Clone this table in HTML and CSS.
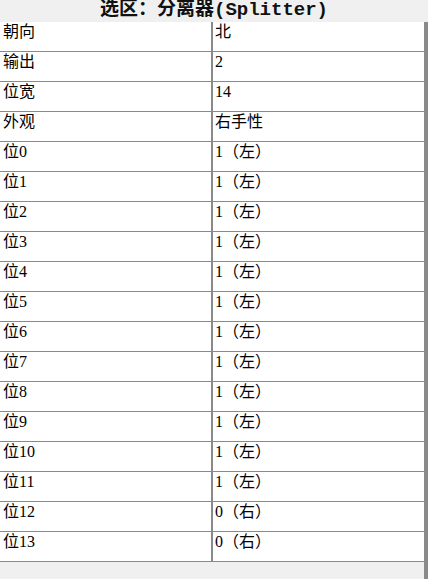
FILE: index.html
```html
<!DOCTYPE html>
<html lang="zh">
<head>
<meta charset="utf-8">
<title>选区：分离器(Splitter)</title>
<link rel="stylesheet" href="styles.css">
</head>
<body>
<div class="panel">
  <div class="title">选区：分离器(Splitter)</div>
  <div class="body">
    <div class="table">
      <div class="row"><div class="key">朝向</div><div class="val">北</div></div>
      <div class="row"><div class="key">输出</div><div class="val">2</div></div>
      <div class="row"><div class="key">位宽</div><div class="val">14</div></div>
      <div class="row"><div class="key">外观</div><div class="val">右手性</div></div>
      <div class="row"><div class="key">位0</div><div class="val">1（左）</div></div>
      <div class="row"><div class="key">位1</div><div class="val">1（左）</div></div>
      <div class="row"><div class="key">位2</div><div class="val">1（左）</div></div>
      <div class="row"><div class="key">位3</div><div class="val">1（左）</div></div>
      <div class="row"><div class="key">位4</div><div class="val">1（左）</div></div>
      <div class="row"><div class="key">位5</div><div class="val">1（左）</div></div>
      <div class="row"><div class="key">位6</div><div class="val">1（左）</div></div>
      <div class="row"><div class="key">位7</div><div class="val">1（左）</div></div>
      <div class="row"><div class="key">位8</div><div class="val">1（左）</div></div>
      <div class="row"><div class="key">位9</div><div class="val">1（左）</div></div>
      <div class="row"><div class="key">位10</div><div class="val">1（左）</div></div>
      <div class="row"><div class="key">位11</div><div class="val">1（左）</div></div>
      <div class="row"><div class="key">位12</div><div class="val">0（右）</div></div>
      <div class="row"><div class="key">位13</div><div class="val">0（右）</div></div>
    </div>
    <div class="scrollbar"></div>
  </div>
</div>
</body>
</html>
```
FILE: styles.css
```css
html, body {
  margin: 0;
  padding: 0;
  background: #f0f0f0;
}
.panel {
  width: 428px;
  height: 579px;
  display: flex;
  flex-direction: column;
  overflow: hidden;
  font-family: "Liberation Serif", "Noto Sans CJK SC", serif;
  color: #000;
}
.title {
  height: 22px;
  flex: none;
  text-align: center;
  font-family: "Liberation Mono", "Noto Sans CJK SC", monospace;
  font-weight: bold;
  font-size: 19px;
  line-height: 20px;
  overflow: hidden;
  color: #111;
}
.body {
  flex: 1;
  display: flex;
}
.table {
  flex: 1;
  display: flex;
  flex-direction: column;
}
.row {
  height: 29px;
  display: grid;
  grid-template-columns: 213px 1fr;
  background: #fff;
  border-bottom: 1px solid #8a8a8a;
  font-size: 16px;
  line-height: 20px;
}
.key {
  padding: 0 0 0 3px;
  border-right: 2px solid #8a8a8a;
}
.val {
  padding: 0 0 0 2px;
}
.scrollbar {
  width: 4px;
  flex: none;
  background: #8a8a8a;
}
```
